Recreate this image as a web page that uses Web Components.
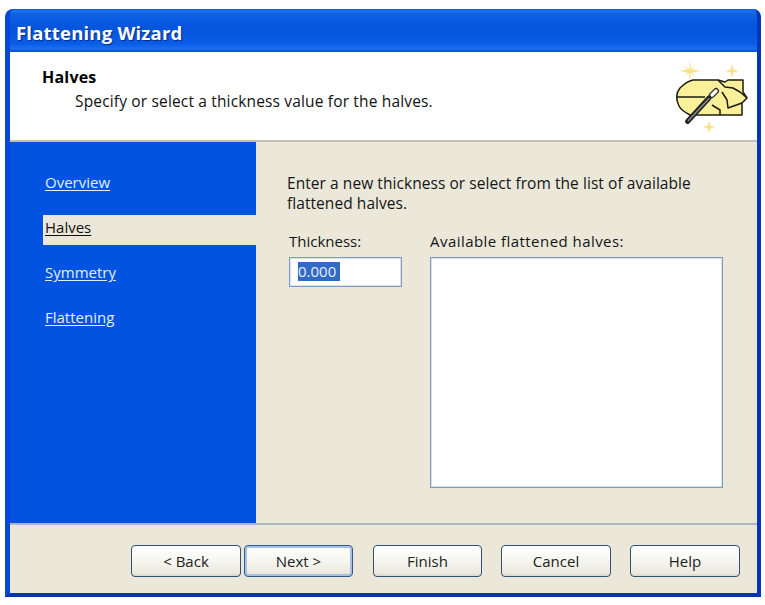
<!DOCTYPE html>
<html><head><meta charset="utf-8"><style>
html,body{margin:0;padding:0;background:#fff}
body{font-family:"Open Sans","DejaVu Sans",sans-serif;font-size:15px;color:#111}
</style></head><body>
<wizard-window heading="Flattening Wizard">
  <wizard-header slot="header" title-text="Halves" sub="Specify or select a thickness value for the halves."></wizard-header>
  <wizard-nav slot="nav">
    <nav-item>Overview</nav-item>
    <nav-item selected>Halves</nav-item>
    <nav-item>Symmetry</nav-item>
    <nav-item>Flattening</nav-item>
  </wizard-nav>
  <halves-panel slot="main"></halves-panel>
  <xp-button slot="footer" style="width:110px">&lt; Back</xp-button>
  <xp-button slot="footer" default style="width:109px;margin-left:3px">Next &gt;</xp-button>
  <xp-button slot="footer" style="width:109px;margin-left:20px">Finish</xp-button>
  <xp-button slot="footer" style="width:110px;margin-left:19px">Cancel</xp-button>
  <xp-button slot="footer" style="width:110px;margin-left:19px">Help</xp-button>
</wizard-window>
<script>
function def(name,html,init){
  customElements.define(name,class extends HTMLElement{
    constructor(){super();const r=this.attachShadow({mode:'open'});r.innerHTML=html;}
    connectedCallback(){if(init)init(this,this.shadowRoot);}
  });
}
def('wizard-window',`<style>
:host{display:flex;flex-direction:column;width:756px;height:588px;margin:9px 4px 8px 5px;box-sizing:border-box;
 background:#0a50d8;border-radius:8px 8px 0 0;overflow:hidden;
 border-left:5px solid #0548d8;border-right:4px solid #0335b8;border-bottom:4px solid #0335b0;border-top:0}
.title{height:43px;flex:none;padding-left:6px;display:flex;align-items:center;box-sizing:border-box;padding-top:3px;
 background:linear-gradient(180deg,#0a4fd2 0,#1f74ec 4%,#0f62e4 12%,#0454dc 45%,#0a5ce8 80%,#1a6cf0 92%,#0550d8 100%);
 color:#fff;font:bold 18.5px "Open Sans","DejaVu Sans",sans-serif;letter-spacing:.2px;text-shadow:1px 1px 1px #0a2a80}
.mid{flex:1;display:flex;min-height:0;background:#ebe8da;}
.foot{flex:none;height:70px;box-sizing:border-box;border-top:2px solid #adb5c0;background:#ebe8da;display:flex;align-items:flex-start;padding:20px 0 0 121px}
</style>
<div class="title"></div>
<slot name="header"></slot>
<div class="mid"><slot name="nav"></slot><slot name="main"></slot></div>
<div class="foot"><slot name="footer"></slot></div>`,(h,r)=>{r.querySelector('.title').textContent=h.getAttribute('heading');});

def('wizard-header',`<style>
:host{display:flex;flex:none;height:90px;box-sizing:border-box;background:#fff;border-bottom:2px solid #c4c2b8;position:relative}
.t{padding:15px 0 0 32px;line-height:20px;color:#000}
b{display:block;font-weight:bold;font-size:16px;letter-spacing:.2px}
.s{display:block;padding-left:33px;margin-top:4px;color:#111;font-size:15.5px;letter-spacing:.16px}
svg{position:absolute;left:661px;top:6px}
</style>
<div class="t"><b></b><span class="s"></span></div>
<svg width="80" height="80" viewBox="671 58 80 80">
 <g fill="#fde08a">
  <path d="M690 60.500L691 69L700.500 71L691 73L690 81.500L689 73L679.500 71L689 69Z"/>
  <path d="M684 65L690 70L696 65L691 71L696 77L690 72L684 77L689 71Z"/>
  <path d="M732 64L733.500 69.500L739 71L733.500 72.500L732 78L730.500 72.500L725 71L730.500 69.500Z"/>
  <path d="M709 121L710.500 125.500L715 127L710.500 128.500L709 133L707.500 128.500L703 127L707.500 125.500Z"/>
 </g>
 <g fill="#faf09a" stroke="#1c1c10" stroke-width="1.500" stroke-linejoin="round">
  <path d="M718 80L725 82L728 80H743V92L747 98L742 103V115H690C686 113 681 110 679 106C676 100 676 93 680 88C684 84 688 81 693 80Z"/>
  <path d="M677 97H705M718 80L725 87L733 88L740 92L747 98M722 92L727 100L728 108L742 103M712 105L720 110L720 115" fill="none"/>
 </g>
 <g stroke-linecap="round">
  <path d="M687.500 121.500L709 98" stroke="#222" stroke-width="5"/>
  <path d="M688.500 120.500L709 98.500" stroke="#8a8a8a" stroke-width="1.500"/>
  <path d="M712 95L716 91" stroke="#222" stroke-width="6"/>
  <path d="M712 95L716 91" stroke="#fff" stroke-width="3.500"/>
 </g>
</svg>`,(h,r)=>{r.querySelector('b').textContent=h.getAttribute('title-text');r.querySelector('.s').textContent=h.getAttribute('sub');});

def('wizard-nav',`<style>
:host{display:flex;flex-direction:column;gap:15px;box-sizing:border-box;width:246px;flex:none;height:100%;padding:28px 0 0 33px;background:#0254e0}
</style><slot></slot>`);

def('nav-item',`<style>
:host{display:block;height:30px;box-sizing:border-box;padding:2px 0 0 2px;line-height:20px;font-size:15px;color:#e4eeff;text-decoration:underline;text-underline-offset:2px}
:host([selected]){background:#ebe8da;color:#111}
</style><slot></slot>`);

def('halves-panel',`<style>
:host{display:block;flex:1;box-sizing:border-box;padding:31px 0 0 31px;background:#ebe8da;color:#151515;line-height:20px;font-size:15px}
p{margin:0;width:420px;font-size:15.5px;letter-spacing:.06px}
.row{display:flex;margin-top:18px;padding-left:2px}
.a{width:141px;flex:none}
label{display:block;height:20px;line-height:20px}
.a+div label{letter-spacing:.45px}
.in{width:113px;height:30px;box-sizing:border-box;border:1px solid #7f9db9;box-shadow:inset 0 0 0 1px rgba(127,157,185,.3);background:#fff;padding:4px 0 0 8px;margin-top:6px}
.in span{background:#316ac5;color:#e8eeff;display:block;height:19px;line-height:19px;width:42px}
.list{width:293px;height:231px;box-sizing:border-box;border:1px solid #7f9db9;box-shadow:inset 0 0 0 1px rgba(127,157,185,.3);background:#fff;margin-top:6px}
</style>
<p>Enter a new thickness or select from the list of available flattened halves.</p>
<div class="row"><div class="a"><label>Thickness:</label><div class="in"><span>0.000</span></div></div>
<div><label>Available flattened halves:</label><div class="list"></div></div></div>`);

def('xp-button',`<style>
:host{display:flex;align-items:center;justify-content:center;box-sizing:border-box;flex:none;height:32px;border:1px solid #2f5272;border-radius:4px;
 background:linear-gradient(180deg,#fff 0,#f6f6f0 50%,#ece9de 90%,#dcd8c8 100%);color:#222;font-size:15px}
:host([default]){box-shadow:inset 0 0 0 2px #a8c0e4;border-color:#2f5a92}
</style><slot></slot>`);
</script>
</body></html>
